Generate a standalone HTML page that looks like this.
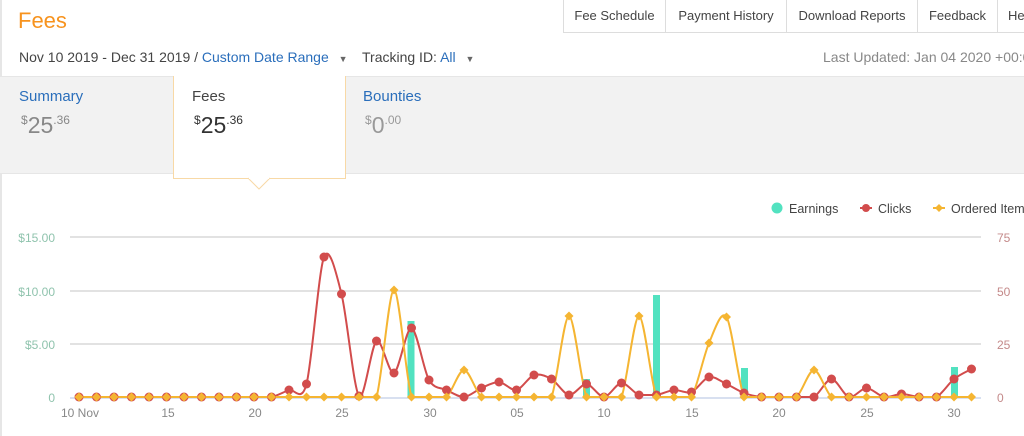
<!DOCTYPE html>
<html><head><meta charset="utf-8"><style>
*{margin:0;padding:0;box-sizing:border-box}
body{width:1024px;height:436px;overflow:hidden;background:#fff;font-family:"Liberation Sans",sans-serif;position:relative;color:#444}
.abs{position:absolute;white-space:nowrap}
.tab{position:absolute;top:0;height:33px;border:1px solid #ddd;border-top:none;font-size:13px;color:#444;line-height:32px;text-align:center}
.blue{color:#2a6ebb}
.amt{font-size:23px;color:#888}
.amt sup{font-size:12px;vertical-align:9px}
</style></head><body>
<div style="position:absolute;left:0;top:0;width:2px;height:436px;background:#e6e6e6"></div>
<div class="abs" style="left:18px;top:8px;font-size:22px;color:#f7931e">Fees</div>
<div class="tab" style="left:563px;width:103px">Fee Schedule</div>
<div class="tab" style="left:665px;width:122px">Payment History</div>
<div class="tab" style="left:786px;width:132px">Download Reports</div>
<div class="tab" style="left:917px;width:81px">Feedback</div>
<div class="tab" style="left:997px;width:60px;text-align:left;padding-left:10px">Help</div>
<div class="abs" style="left:19px;top:49px;font-size:14px;color:#444">Nov 10 2019 - Dec 31 2019 / <span class="blue">Custom Date Range</span> <span style="font-size:9px;color:#666;margin-left:6px">▼</span></div>
<div class="abs" style="left:362px;top:49px;font-size:14px;color:#444">Tracking ID: <span class="blue">All</span> <span style="font-size:9px;color:#666;margin-left:6px">▼</span></div>
<div class="abs" style="left:823px;top:49px;font-size:14px;color:#888">Last Updated: Jan 04 2020 +00:00</div>
<div style="position:absolute;left:0;top:76px;width:1024px;height:98px;background:#f2f2f2;border-top:1px solid #e6e6e6;border-bottom:1px solid #e6e6e6"></div>
<div style="position:absolute;left:173px;top:76px;width:173px;height:103px;background:#fff;border:1px solid #f8d9a6;border-top:none"></div>
<svg class="abs" style="left:248px;top:177px" width="22" height="14"><path d="M0 1 L11 12 L22 1" fill="#fff" stroke="#f8d9a6"/><rect x="1" y="0" width="20" height="2" fill="#fff"/></svg>
<div class="abs blue" style="left:19px;top:88px;font-size:15px">Summary</div>
<div class="abs amt" style="left:21px;top:112px"><sup>$</sup>25<sup>.36</sup></div>
<div class="abs" style="left:192px;top:88px;font-size:15px;color:#444">Fees</div>
<div class="abs amt" style="left:194px;top:112px;color:#333"><sup>$</sup>25<sup>.36</sup></div>
<div class="abs blue" style="left:363px;top:88px;font-size:15px">Bounties</div>
<div class="abs amt" style="left:365px;top:112px;color:#999"><sup>$</sup>0<sup>.00</sup></div>

<svg class="abs" style="left:0;top:0" width="1024" height="436" id="ch" font-family="Liberation Sans, sans-serif">
<g stroke="#e2e2e2" stroke-width="2"><line x1="70" x2="981" y1="237" y2="237"/><line x1="70" x2="981" y1="291" y2="291"/><line x1="70" x2="981" y1="344" y2="344"/></g>
<line x1="70" x2="981" y1="398" y2="398" stroke="#ccd6eb" stroke-width="1.5"/>
<g font-size="12" fill="#8fc3ad" text-anchor="end"><text x="55" y="242">$15.00</text><text x="55" y="296">$10.00</text><text x="55" y="349">$5.00</text><text x="55" y="402">0</text></g>
<g font-size="12" fill="#c48a8a"><text x="997" y="242">75</text><text x="997" y="296">50</text><text x="997" y="349">25</text><text x="997" y="402">0</text></g>
<g font-size="12" fill="#888" text-anchor="middle"><text x="80" y="417">10 Nov</text><text x="168" y="417">15</text><text x="255" y="417">20</text><text x="342" y="417">25</text><text x="430" y="417">30</text><text x="517" y="417">05</text><text x="604" y="417">10</text><text x="692" y="417">15</text><text x="779" y="417">20</text><text x="867" y="417">25</text><text x="954" y="417">30</text></g>
<g fill="#52e2c0"><rect x="407.5" y="321" width="7" height="77"/><rect x="583" y="379" width="7" height="19"/><rect x="653" y="295" width="7" height="103"/><rect x="741" y="368" width="7" height="30"/><rect x="951" y="367" width="7" height="31"/></g>
<g id="lines"></g>
<circle cx="777" cy="208" r="5.5" fill="#52e2c0"/><text x="789" y="213" font-size="12.5" fill="#444">Earnings</text>
<line x1="860" x2="872" y1="208" y2="208" stroke="#d24c4c" stroke-width="2"/><circle cx="866" cy="208" r="4" fill="#d24c4c"/><text x="878" y="213" font-size="12.5" fill="#444">Clicks</text>
<line x1="933" x2="945" y1="208" y2="208" stroke="#f5b532" stroke-width="2"/><path d="M939 204 L943 208 L939 212 L935 208Z" fill="#f5b532"/><text x="951" y="213" font-size="12.5" fill="#444">Ordered Items</text>
</svg>
<script>
var X=function(i){return 79+17.5*i};
var red=[397,397,397,397,397,397,397,397,397,397,397,397,390,384,257,294,396,341,373,328,380,390,397,388,382,390,375,379,395,384,397,383,395,395,390,392,377,384,393,397,397,397,397,379,397,388,397,394,397,397,379,369];
var yel=[];for(var i=0;i<52;i++)yel.push(397);
yel[18]=290;yel[22]=370;yel[28]=316;yel[32]=316;yel[36]=343;yel[37]=317;yel[42]=370;
function path(a){var p=[];for(var i=0;i<a.length;i++)p.push([X(i),a[i]]);var d="M"+p[0][0]+" "+p[0][1];
for(var i=0;i<p.length-1;i++){var p0=p[i-1]||p[i],p1=p[i],p2=p[i+1],p3=p[i+2]||p2;var t=1/3*0.9;
var c1x=p1[0]+(p2[0]-p0[0])*t/2,c1y=p1[1]+(p2[1]-p0[1])*t/2,c2x=p2[0]-(p3[0]-p1[0])*t/2,c2y=p2[1]-(p3[1]-p1[1])*t/2;
if(p1[1]==p2[1]){c1y=p1[1];c2y=p2[1];}
d+=" C"+c1x+" "+c1y+" "+c2x+" "+c2y+" "+p2[0]+" "+p2[1];}return d;}
var s='<path d="'+path(red)+'" fill="none" stroke="#d24c4c" stroke-width="2"/>';
s+='<path d="'+path(yel)+'" fill="none" stroke="#f5b532" stroke-width="2"/>';
for(var i=0;i<52;i++){s+='<circle cx="'+X(i)+'" cy="'+red[i]+'" r="4.5" fill="#d24c4c"/>';}
for(var i=0;i<52;i++){var x=X(i),y=yel[i];s+='<path d="M'+x+' '+(y-4.5)+' L'+(x+4.5)+' '+y+' L'+x+' '+(y+4.5)+' L'+(x-4.5)+' '+y+'Z" fill="#f5b532"/>';}
document.getElementById('lines').innerHTML=s;
</script>
</body></html>
